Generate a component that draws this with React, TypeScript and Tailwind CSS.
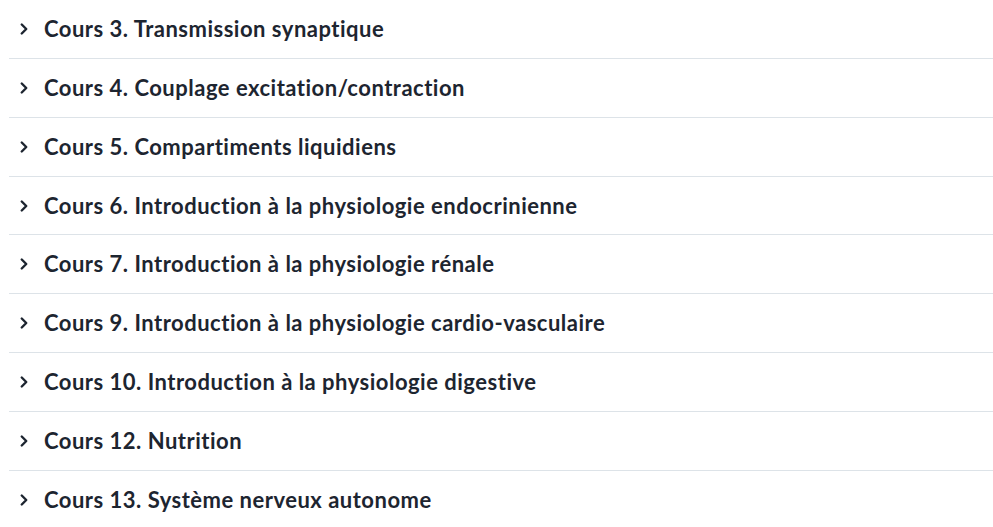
import { ChevronRight } from "lucide-react";

const courses = [
  "Cours 3. Transmission synaptique",
  "Cours 4. Couplage excitation/contraction",
  "Cours 5. Compartiments liquidiens",
  "Cours 6. Introduction à la physiologie endocrinienne",
  "Cours 7. Introduction à la physiologie rénale",
  "Cours 9. Introduction à la physiologie cardio-vasculaire",
  "Cours 10. Introduction à la physiologie digestive",
  "Cours 12. Nutrition",
  "Cours 13. Système nerveux autonome",
];

export default function App() {
  return (
    <div className="w-[993px] h-[527px] overflow-hidden bg-white pl-[9px] font-['Lato',sans-serif]">
      <ul>
        {courses.map((title, i) => (
          <li
            key={title}
            className={`flex items-center h-[58.86px] ${i < courses.length - 1 ? "border-b border-[#dde3e8]" : ""}`}
          >
            <div className="w-[35px] flex justify-start pl-[6px]">
              <ChevronRight size={18} strokeWidth={3.2} className="text-[#1d2530]" />
            </div>
            <span className="text-[22px] font-bold text-[#1d2530] leading-none tracking-[0.5px] [font-variant-ligatures:none]">
              {title}
            </span>
          </li>
        ))}
      </ul>
    </div>
  );
}
